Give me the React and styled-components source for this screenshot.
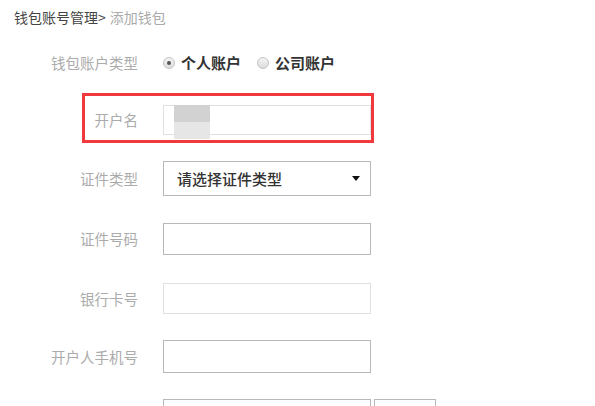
import React from 'react'
import styled, { createGlobalStyle } from 'styled-components';

const GlobalStyle = createGlobalStyle`
  body {
    margin: 0;
    background: #fff;
    font-family: "Noto Sans CJK SC", "Microsoft YaHei", sans-serif;
  }
`;

const Page = styled.div`
  width: 595px;
  height: 406px;
  overflow: hidden;
`;

const Crumbs = styled.div`
  height: 34px;
  padding-left: 14px;
  font-size: 14px;
  line-height: 34px;
  color: #444;
`;

const Current = styled.span`
  color: #aaa;
  margin-left: 4px;
`;

const Form = styled.div`
  display: flex;
  flex-direction: column;
`;

const Row = styled.div`
  position: relative;
  display: flex;
  align-items: center;
  height: ${p => p.h}px;
`;

const Label = styled.div`
  width: 138px;
  margin-right: 25px;
  text-align: right;
  font-size: 14.5px;
  color: #ababab;
`;

const Radio = styled.span`
  width: 10px;
  height: 10px;
  border-radius: 50%;
  border: 1px solid #c4c4c4;
  background: linear-gradient(#f4f4f4, #dcdcdc);
  display: inline-flex;
  align-items: center;
  justify-content: center;
  margin-right: 6px;
  &::after {
    content: '';
    width: 4px;
    height: 4px;
    border-radius: 50%;
    background: ${p => (p.checked ? '#555' : 'transparent')};
  }
`;

const Option = styled.label`
  display: flex;
  align-items: center;
  font-size: 15px;
  font-weight: 700;
  color: #333;
  margin-right: 16px;
`;

const Input = styled.div`
  position: relative;
  box-sizing: border-box;
  width: ${p => p.w || 208}px;
  height: ${p => p.h}px;
  border: 1px solid ${p => p.light ? '#e0e0e0' : '#b8b8b8'};
  background: #fff;
`;

const Side = styled(Input)`
  margin-left: 3px;
`;

const Select = styled(Input)`
  display: flex;
  align-items: center;
  justify-content: space-between;
  padding: 0 10px 0 13px;
  font-size: 15px;
  font-weight: 500;
  color: #333;
`;

const Caret = styled.span`
  width: 0;
  height: 0;
  border-left: 4px solid transparent;
  border-right: 4px solid transparent;
  border-top: 5px solid #111;
`;

const Highlight = styled.div`
  position: absolute;
  left: 82px;
  top: 2px;
  width: 292px;
  height: 50px;
  box-sizing: border-box;
  border: 3px solid #f0393d;
  pointer-events: none;
`;

const Mosaic = styled.div`
  position: absolute;
  left: 10px;
  top: -1px;
  width: 36px;
  height: 34px;
  display: flex;
  flex-direction: column;
  &::before {
    content: '';
    flex: 1.1;
    background: #d2d2d2;
  }
  &::after {
    content: '';
    flex: 1;
    background: #e6e6e6;
  }
`;

const App = () => {
  return (
    <Page>
      <GlobalStyle />
      <Crumbs>
        钱包账号管理&gt;<Current>添加钱包</Current>
      </Crumbs>
      <Form>
        <Row h={57}>
          <Label>钱包账户类型</Label>
          <Option><Radio checked />个人账户</Option>
          <Option><Radio />公司账户</Option>
        </Row>
        <Row h={57}>
          <Highlight />
          <Label>开户名</Label>
          <Input h={30} light>
            <Mosaic />
          </Input>
        </Row>
        <Row h={60}>
          <Label>证件类型</Label>
          <Select h={35}>
            请选择证件类型
            <Caret />
          </Select>
        </Row>
        <Row h={61}>
          <Label>证件号码</Label>
          <Input h={32} />
        </Row>
        <Row h={58}>
          <Label>银行卡号</Label>
          <Input h={31} light />
        </Row>
        <Row h={58}>
          <Label>开户人手机号</Label>
          <Input h={33} />
        </Row>
        <Row h={60}>
          <Label />
          <Input h={32} />
          <Side h={32} w={62} />
        </Row>
      </Form>
    </Page>
  )
}

export default App
